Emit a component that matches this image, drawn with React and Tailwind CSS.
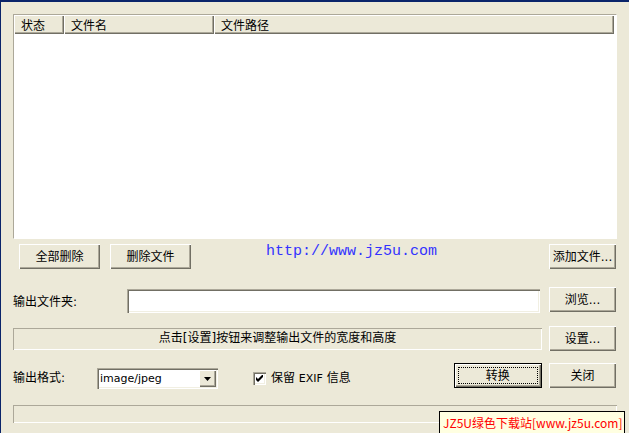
import React from "react";

const raised =
  "bg-[#ece9d8] shadow-[inset_1px_1px_#ffffff,inset_-1px_-1px_#716f64,inset_-2px_-2px_#aca899] flex items-center justify-center pt-[1px]";
const sunken =
  "bg-white shadow-[inset_1px_1px_#aca899,inset_2px_2px_#716f64,inset_-1px_-1px_#ffffff,inset_-2px_-2px_#f1efe2]";
const thinSunken =
  "shadow-[inset_1px_1px_#aca899,inset_-1px_-1px_#ffffff]";
const headCell =
  "h-full flex items-center pl-[7px] pt-[2px] bg-[#ece9d8] shadow-[inset_1px_1px_#ffffff,inset_-1px_-1px_#716f64,inset_-2px_-2px_#aca899]";

export default function App() {
  return (
    <div className="relative w-[629px] h-[433px] overflow-hidden bg-[#ece9d8] border-t-2 border-l border-[#0a246a] text-[12px] leading-[14px] text-black font-['DejaVu_Sans','Noto_Sans_CJK_SC',sans-serif]">
      <div className="flex flex-col pl-[12px] pt-[12px]">
        {/* list */}
        <div className="w-[604px] h-[225px] bg-white border border-t-[#aca899] border-l-[#aca899] border-r-white border-b-white flex flex-col">
          <div className="flex h-[19px] w-[600px]">
            <div className={`${headCell} w-[50px]`}>状态</div>
            <div className={`${headCell} w-[150px]`}>文件名</div>
            <div className={`${headCell} flex-1`}>文件路径</div>
          </div>
        </div>

        {/* row 1 */}
        <div className="mt-[5px] w-[604px] h-[25px] flex items-center">
          <div className={`${raised} ml-[6px] w-[81px] h-[25px]`}>全部删除</div>
          <div className={`${raised} ml-[10px] w-[81px] h-[25px]`}>删除文件</div>
          <div className="ml-[75px] self-start -mt-[1px] leading-[17px] text-[15px] text-[#3333ff] font-['Liberation_Mono',monospace]">
            http://www.jz5u.com
          </div>
          <div className={`${raised} ml-auto mr-[1px] w-[67px] h-[25px]`}>添加文件...</div>
        </div>

        {/* row 2 */}
        <div className="mt-[18px] w-[604px] h-[26px] flex items-start">
          <div className="self-center pt-[3px]">输出文件夹:</div>
          <div className={`${sunken} ml-auto mt-[2px] w-[413px] h-[24px]`}></div>
          <div className={`${raised} ml-[9px] mr-[1px] w-[67px] h-[25px]`}>浏览...</div>
        </div>

        {/* row 3 */}
        <div className="mt-[13px] w-[604px] h-[25px] flex items-center">
          <div className={`${thinSunken} w-[529px] h-[22px] flex items-center justify-center pb-[2px]`}>
            点击[设置]按钮来调整输出文件的宽度和高度
          </div>
          <div className={`${raised} ml-auto mr-[1px] w-[67px] h-[25px]`}>设置...</div>
        </div>

        {/* row 4 */}
        <div className="mt-[12px] w-[604px] h-[25px] flex items-center">
          <div className="w-[84px] pt-[5px]">输出格式:</div>
          <div className={`${sunken} w-[121px] h-[21px] mt-[5px] flex items-center p-[2px]`}>
            <div className="flex-1 pl-[1px] text-[11px] leading-[15px] font-['DejaVu_Sans',sans-serif]">image/jpeg</div>
            <div className={`${raised} w-[17px] h-[17px]`}>
              <svg width="7" height="4" viewBox="0 0 7 4">
                <path d="M0 0h7L3.5 4z" fill="#000" />
              </svg>
            </div>
          </div>
          <div className="ml-[35px] mt-[5px] flex items-center">
            <div className={`${sunken} w-[13px] h-[13px] flex items-center justify-center`}>
              <svg width="7" height="7" viewBox="0 0 7 7">
                <path d="M0 2v3l2 2 5-5V-1L2 4z" fill="#000" />
              </svg>
            </div>
            <div className="ml-[5px]">
              保留 <span className="text-[11px]">EXIF</span> 信息
            </div>
          </div>
          <div className="relative ml-[103px] w-[88px] h-[25px] border border-black">
            <div className={`${raised} w-full h-full`}>转换</div>
            <div className="absolute inset-[3px] border border-dotted border-black"></div>
          </div>
          <div className={`${raised} ml-auto mr-[1px] w-[67px] h-[25px]`}>关闭</div>
        </div>

        {/* status */}
        <div className={`${thinSunken} mt-[17px] w-[604px] h-[18px]`}></div>
      </div>

      {/* watermark overlay */}
      <div className="absolute left-[438px] top-[409px] w-[186px] h-[30px] bg-[#ffffe1] border border-black pl-[3px] pt-[3px] text-[#ff0000] text-[12px] leading-[16px] whitespace-nowrap font-['Noto_Sans_CJK_SC',sans-serif]">
        JZ5U绿色下载站[www.jz5u.com]
      </div>
    </div>
  );
}
